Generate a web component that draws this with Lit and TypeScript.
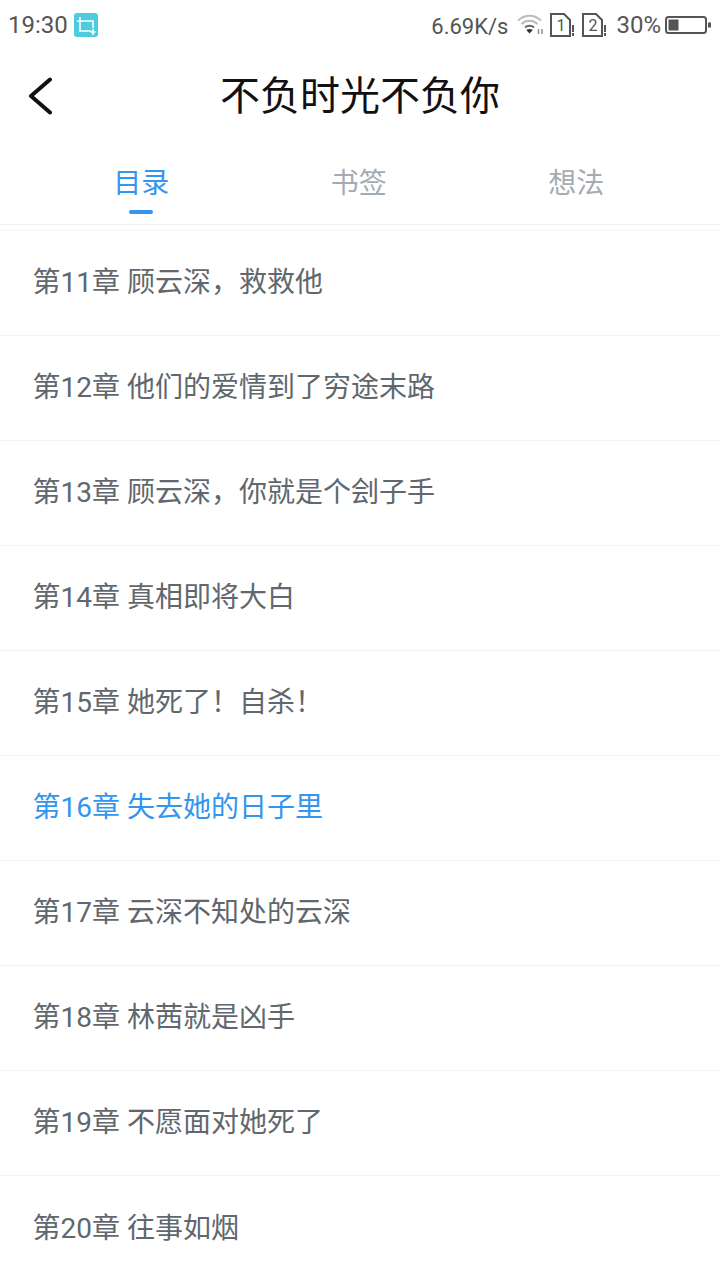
import { LitElement, html, css } from 'lit';
import { customElement } from 'lit/decorators.js';
import { classMap } from 'lit/directives/class-map.js';

const chapters = [
	{ text: '第11章 顾云深，救救他' },
	{ text: '第12章 他们的爱情到了穷途末路' },
	{ text: '第13章 顾云深，你就是个刽子手' },
	{ text: '第14章 真相即将大白' },
	{ text: '第15章 她死了！自杀！' },
	{ text: '第16章 失去她的日子里', current: true },
	{ text: '第17章 云深不知处的云深' },
	{ text: '第18章 林茜就是凶手' },
	{ text: '第19章 不愿面对她死了' },
	{ text: '第20章 往事如烟' },
];

@customElement('app-root')
export class AppRoot extends LitElement {
	private simCard(label: string) {
		return html`<span class="sim">
			<svg width="25" height="24" viewBox="0 0 25 24" fill="none">
				<path d="M1 1H14L20 7V23H1Z" stroke="#555" stroke-width="2" />
				<rect x="22" y="12" width="2" height="7" fill="#555" />
				<rect x="22" y="20" width="2" height="3" fill="#555" />
			</svg>
			<span class="sim-label">${label}</span>
		</span>`;
	}

	protected render() {
		return html`
			<div class="status">
				<div class="status-left">
					<span class="time">19:30</span>
					<svg class="shot" width="24" height="24" viewBox="0 0 24 24" fill="none">
						<rect width="24" height="24" rx="3" fill="#4fcbe0" />
						<path d="M3 8H19V15M6 4V18H17M19 16V22M16.5 19H21.5" stroke="#fff" stroke-width="1.6" />
					</svg>
				</div>
				<div class="status-right">
					<span class="speed">6.69K/s</span>
					<svg class="wifi" width="26" height="24" viewBox="0 0 26 24" fill="none">
						<path d="M1 7.5C7.5 1 17.5 1 24 7.5" stroke="#bbb" stroke-width="2" />
						<path d="M4.5 11C9 6.8 16 6.8 20.5 11" stroke="#bbb" stroke-width="2" />
						<path d="M8 14.5C10.5 12.2 14.5 12.2 17 14.5" stroke="#666" stroke-width="2" />
						<path d="M12.5 20.5L9.3 17C11 15.6 14 15.6 15.7 17Z" fill="#333" />
						<path d="M21.5 21V16M25 21V16" stroke="#888" stroke-width="1.4" />
					</svg>
					${this.simCard('1')} ${this.simCard('2')}
					<span class="battery-text">30%</span>
					<svg class="battery" width="46" height="20" viewBox="0 0 46 20" fill="none">
						<rect x="1" y="2" width="40" height="16" rx="2.5" stroke="#555" stroke-width="2" />
						<rect x="3.5" y="4.5" width="10" height="11" fill="#555" />
						<rect x="43" y="7.5" width="3" height="5" fill="#555" />
					</svg>
				</div>
			</div>

			<header class="nav">
				<svg class="back" width="26" height="38" viewBox="0 0 26 38" fill="none">
					<path d="M23 2.5L4 19L23 35.5" stroke="#111" stroke-width="4" stroke-linecap="round" stroke-linejoin="round" />
				</svg>
				<h1 class="title">不负时光不负你</h1>
			</header>

			<nav class="tabs">
				<div class="tab tab--active">目录<span class="indicator"></span></div>
				<div class="tab">书签</div>
				<div class="tab">想法</div>
			</nav>

			<ul class="list">
				${chapters.map(
					(c) => html`<li class=${classMap({ row: true, 'row--current': !!c.current })}>${c.text}</li>`,
				)}
			</ul>
		`;
	}

	static styles = css`
		:host {
			display: block;
			width: 720px;
			height: 1280px;
			overflow: hidden;
			background: #fff;
			font-family: Roboto, 'Noto Sans CJK SC', sans-serif;
		}

		.status {
			height: 50px;
			display: flex;
			align-items: center;
			justify-content: space-between;
			padding: 0 9px 0 8px;
			color: #555;
			font-size: 24px;
		}

		.status-left,
		.status-right {
			display: flex;
			align-items: center;
		}

		.shot {
			margin-left: 6px;
		}

		.speed {
			font-size: 22px;
			padding-top: 2px;
		}

		.wifi {
			margin-left: 9px;
		}

		.sim {
			position: relative;
			display: block;
			width: 25px;
			height: 24px;
			margin-left: 7px;
		}

		.sim svg {
			display: block;
		}

		.sim-label {
			position: absolute;
			left: 0;
			width: 21px;
			top: 3px;
			text-align: center;
			font-size: 16px;
			line-height: 20px;
		}

		.battery-text {
			margin-left: 9px;
		}

		.battery {
			margin-left: 4px;
		}

		.nav {
			position: relative;
			height: 90px;
			box-sizing: border-box;
			padding-bottom: 4px;
			display: flex;
			align-items: center;
			justify-content: center;
		}

		.back {
			position: absolute;
			left: 27px;
			top: 27px;
		}

		.title {
			margin: 0;
			font-size: 40px;
			font-weight: 400;
			color: #111;
		}

		.tabs {
			height: 85px;
			box-sizing: border-box;
			padding: 0 32.5px;
			display: grid;
			grid-template-columns: repeat(3, 217.5px);
			border-bottom: 1px solid #f0f0f0;
		}

		.tab {
			position: relative;
			padding-top: 23px;
			text-align: center;
			font-size: 28px;
			line-height: 42px;
			color: #a3acb3;
		}

		.tab--active {
			color: #3296ee;
		}

		.indicator {
			position: absolute;
			left: 50%;
			bottom: 10px;
			width: 24px;
			height: 4px;
			margin-left: -12px;
			border-radius: 2px;
			background: #3296ee;
		}

		.list {
			list-style: none;
			margin: 5px 0 0;
			padding: 0;
			border-top: 1px solid #f3f3f3;
		}

		.row {
			height: 105px;
			box-sizing: border-box;
			padding: 0 0 6px 32.5px;
			display: flex;
			align-items: center;
			font-size: 28px;
			color: #60676d;
			border-bottom: 1px solid #f3f3f3;
		}

		.row:last-child {
			border-bottom: none;
		}

		.row--current {
			color: #3296ee;
		}
	`;
}
